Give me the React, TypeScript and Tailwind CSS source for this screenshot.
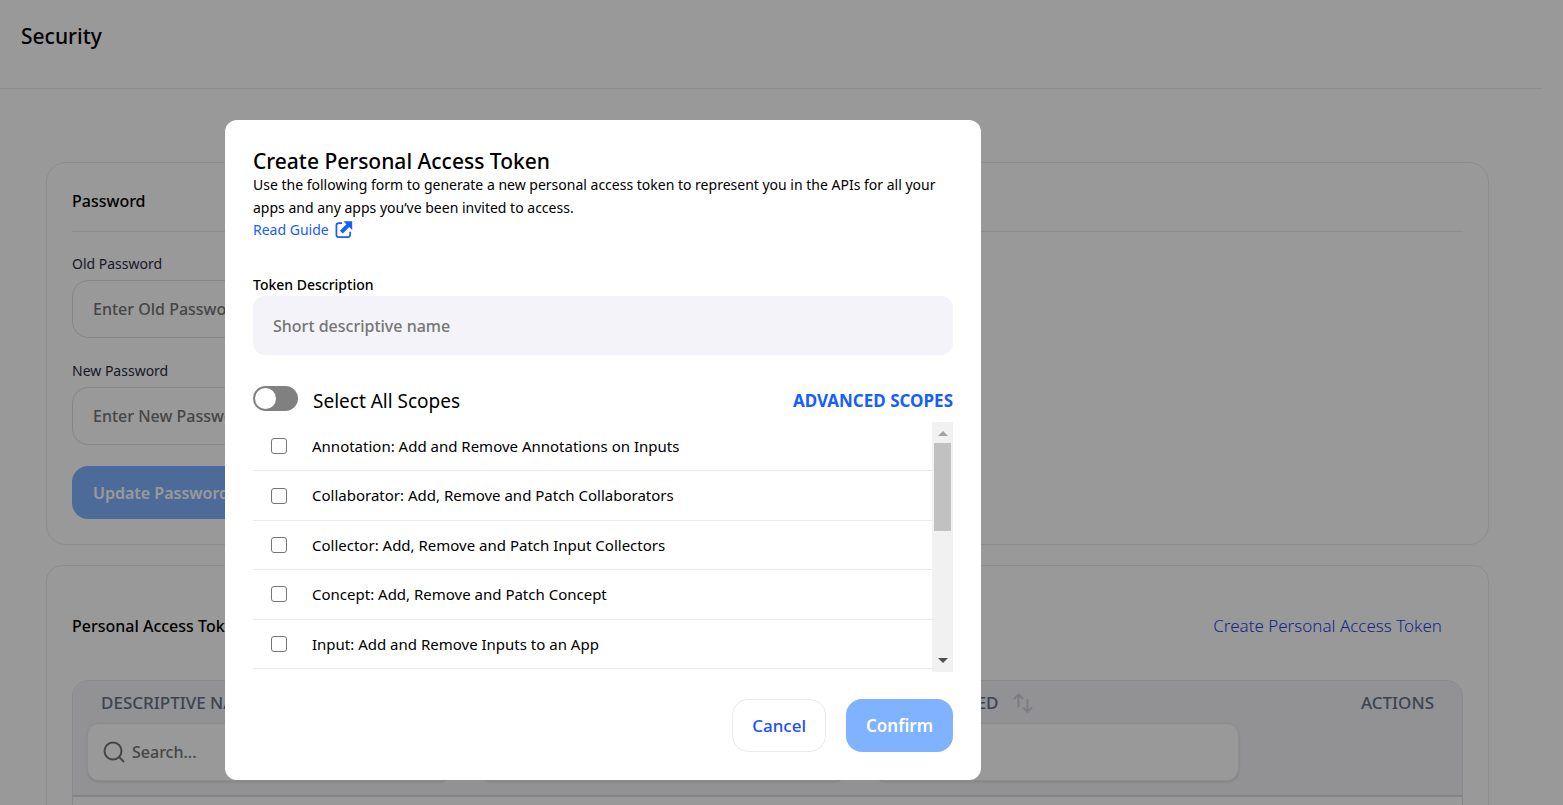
import React from "react";

const scopes = [
  "Annotation: Add and Remove Annotations on Inputs",
  "Collaborator: Add, Remove and Patch Collaborators",
  "Collector: Add, Remove and Patch Input Collectors",
  "Concept: Add, Remove and Patch Concept",
  "Input: Add and Remove Inputs to an App",
];

function ExternalIcon() {
  return (
    <svg width="18" height="18" viewBox="0 0 18 18" fill="none" aria-hidden="true">
      <path d="M7 2.200H3.800a2.400 2.400 0 0 0-2.400 2.400v9.200a2.400 2.400 0 0 0 2.400 2.400h8.900a2.400 2.400 0 0 0 2.400-2.400v-3" stroke="#155eff" strokeWidth="1.700" />
      <path d="M8.500 .3h8.700V9l-3-3-6.400 6.600-2.900-2.900 6.500-6.500z" fill="#155eff" />
    </svg>
  );
}

function SortIcon() {
  return (
    <svg width="20" height="20" viewBox="0 0 20 20" fill="none" stroke="#cdd0d8" strokeWidth="2" strokeLinecap="round" strokeLinejoin="round" aria-hidden="true">
      <path d="M5.500 13.500V2M1.500 5.500l4-4 4 4" />
      <path d="M14.500 7v11.500M10.500 15l4 4 4-4" />
    </svg>
  );
}

function SearchIcon() {
  return (
    <svg width="22" height="22" viewBox="0 0 22 22" fill="none" stroke="#757575" strokeWidth="2" className="shrink-0" aria-hidden="true">
      <circle cx="10" cy="10" r="8.500" />
      <path d="M16 16l5 5" />
    </svg>
  );
}

function PasswordField({ id, label, placeholder }: { id: string; label: string; placeholder: string }) {
  return (
    <div className="flex flex-col gap-1">
      <label htmlFor={id} className="text-sm leading-6 text-[#2b2b45]">{label}</label>
      <input
        id={id}
        type="password"
        placeholder={placeholder}
        className="h-[58px] w-full rounded-2xl border border-[#dfdfe3] px-5 text-base font-medium placeholder:text-[#757575]"
      />
    </div>
  );
}

function SearchCell({ title, id }: { title: string; id: string }) {
  return (
    <th scope="col" className="px-[14px] pt-2 pb-[14px] text-left font-medium">
      <div className="flex h-7 items-center gap-4 px-[14px]">
        {title}
        <SortIcon />
      </div>
      <div className="mt-[6px] flex h-[58px] items-center gap-[7px] rounded-xl border border-[#ececf0] bg-white px-[15px] shadow-sm">
        <SearchIcon />
        <input id={id} aria-label={title} placeholder="Search..." className="w-full min-w-0 text-base font-medium placeholder:text-[#757575]" />
      </div>
    </th>
  );
}

function DateCell() {
  return (
    <th scope="col" className="px-[14px] pt-2 pb-[14px] text-left font-medium">
      <div className="flex h-7 items-center gap-[14px] pl-[7px]">
        DATE CREATED
        <SortIcon />
      </div>
      <input aria-label="DATE CREATED" className="mt-[6px] block h-[58px] w-full rounded-xl border border-[#ececf0] bg-white px-[15px] shadow-sm" />
    </th>
  );
}

function Page() {
  return (
    <div className="pr-[21px]">
      <header className="h-[89px] border-b border-[#ebebee] px-[21px] pt-5">
        <h1 className="text-[21px] leading-8 font-medium">Security</h1>
      </header>
      <main className="flex flex-col gap-5 pt-[73px] pr-[53px] pl-[46px]">
        <section className="rounded-[20px] border border-[#ebebee] px-[25px] pt-5 pb-[25px]">
          <h2 className="border-b border-[#ebebee] pt-1 pb-4 text-base leading-7 font-medium">Password</h2>
          <div className="flex w-1/2 flex-col gap-[21px] pt-5">
            <PasswordField id="old-password" label="Old Password" placeholder="Enter Old Password" />
            <PasswordField id="new-password" label="New Password" placeholder="Enter New Password" />
            <button className="h-[53px] self-start rounded-2xl bg-[#80b3ff] px-[21px] text-base font-semibold text-white">Update Password</button>
          </div>
        </section>
        <section className="rounded-2xl border border-[#ebebee] px-[25px] pt-[46px]">
          <div className="flex items-center justify-between pr-[21px]">
            <h2 className="text-base leading-7 font-medium">Personal Access Tokens</h2>
            <a href="#create" className="text-[17px] leading-7 font-light text-[#1f3fe0]">Create Personal Access Token</a>
          </div>
          <div className="mt-10 h-40 overflow-hidden rounded-t-2xl border border-[#e4e4ea]">
            <table className="w-full table-fixed border-collapse text-[17px] text-[#667085]">
              <thead className="border-b-2 border-[#dcdce2] bg-[#f4f4f9]">
                <tr className="align-top">
                  <SearchCell id="search-name" title="DESCRIPTIVE NAME" />
                  <SearchCell id="search-scopes" title="SCOPES" />
                  <DateCell />
                  <th scope="col" className="w-[209px] px-7 pt-2 text-right leading-7 font-medium">ACTIONS</th>
                </tr>
              </thead>
            </table>
          </div>
        </section>
      </main>
    </div>
  );
}

function ScrollTrack() {
  return (
    <div className="flex w-[21px] flex-col items-center justify-between bg-[#f1f1f1]" aria-hidden="true">
      <div className="flex w-full flex-col items-center">
        <div className="flex h-[21px] items-center pt-[2px]">
          <svg width="10" height="5" viewBox="0 0 10 5"><path d="M5 0l5 5H0z" fill="#a3a3a3" /></svg>
        </div>
        <div className="h-[88px] w-[17px] bg-[#c1c1c1]" />
      </div>
      <div className="flex h-[21px] items-center pb-[2px]">
        <svg width="10" height="5" viewBox="0 0 10 5"><path d="M0 0h10L5 5z" fill="#505050" /></svg>
      </div>
    </div>
  );
}

function TokenDialog() {
  return (
    <div role="dialog" aria-modal="true" aria-labelledby="dialog-title" className="w-[756px] rounded-xl bg-white px-7 pt-[29px] pb-7">
      <h2 id="dialog-title" className="text-[21px] leading-6 font-medium">Create Personal Access Token</h2>
      <p className="text-sm leading-[23px]">
        Use the following form to generate a new personal access token to represent you in the APIs for all your apps and any apps you’ve been invited to access.
      </p>
      <a href="#guide" className="flex items-center gap-[6px] text-sm leading-[22px] text-[#155eff]">
        Read Guide
        <ExternalIcon />
      </a>

      <label htmlFor="token-description" className="mt-8 block text-sm leading-[23px] font-medium">Token Description</label>
      <input
        id="token-description"
        placeholder="Short descriptive name"
        className="block h-[59px] w-full rounded-xl bg-[#f4f3f9] px-5 text-base font-medium placeholder:text-[#757575]"
      />

      <div className="mt-[31px] flex h-7 items-start justify-between">
        <label className="flex items-start gap-[15px] text-[19px] leading-[30px]">
          <input type="checkbox" role="switch" className="peer sr-only" />
          <span className="flex h-[25px] w-[45px] items-center rounded-full bg-[#808080] px-[2px]">
            <span className="size-[21px] rounded-full bg-white" />
          </span>
          Select All Scopes
        </label>
        <button className="text-[17px] leading-[30px] font-bold text-[#155eff]">ADVANCED SCOPES</button>
      </div>

      <div className="mt-2 flex h-[250px]">
        <ul className="grid h-[247px] flex-1 grid-rows-5">
          {scopes.map((scope) => (
            <li key={scope} className="border-b border-[#ebebeb]">
              <label className="flex h-full items-center gap-[25px] pl-[18px] text-[15px]">
                <input type="checkbox" className="size-4 appearance-none rounded-[3px] border border-[#767676] bg-white checked:bg-[#155eff]" />
                {scope}
              </label>
            </li>
          ))}
        </ul>
        <ScrollTrack />
      </div>

      <div className="mt-[27px] flex justify-end gap-5">
        <button className="h-[53px] rounded-2xl border border-[#ebebee] px-[19px] text-[17px] font-medium text-[#1a4fff]">Cancel</button>
        <button className="h-[53px] rounded-2xl bg-[#80b3ff] px-5 text-[17px] font-semibold text-white">Confirm</button>
      </div>
    </div>
  );
}

export default function App() {
  return (
    <div className="h-screen overflow-hidden bg-white font-['Noto_Sans','Open_Sans',sans-serif] text-black">
      <Page />
      <div className="fixed inset-0 flex items-start overflow-hidden bg-black/40 pt-[120px] pl-[225px]">
        <TokenDialog />
      </div>
    </div>
  );
}
